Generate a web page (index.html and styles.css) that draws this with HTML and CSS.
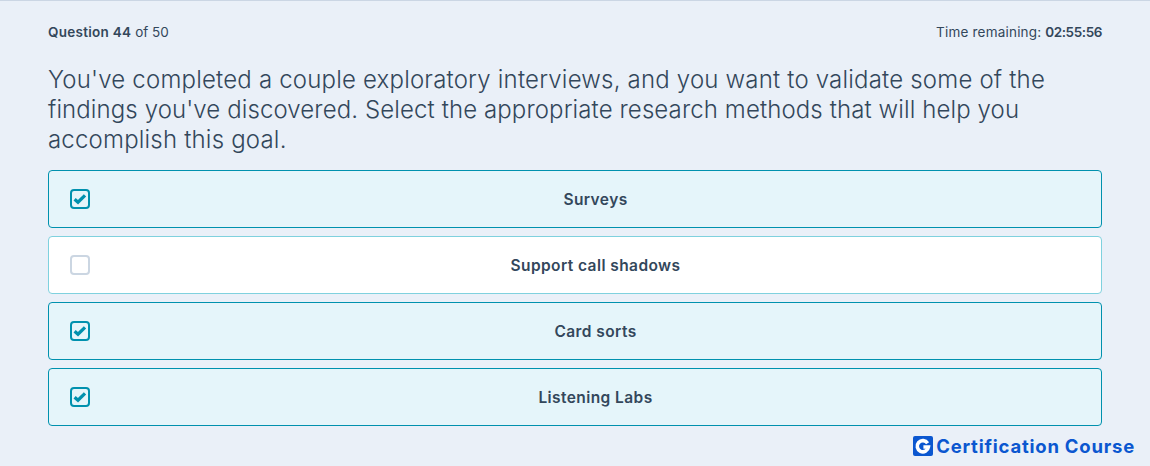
FILE: index.html
```html
<!DOCTYPE html>
<html lang="en">
<head>
<meta charset="utf-8">
<title>Question 44 of 50</title>
<link rel="stylesheet" href="styles.css">
</head>
<body>
<main class="quiz">
  <header class="meta">
    <div><strong class="count">Question 44</strong> of 50</div>
    <div><span class="timer-label">Time remaining:</span> <strong class="timer">02:55:56</strong></div>
  </header>
  <h1 class="question">You've completed a couple exploratory interviews, and you want to validate some of the <span class="tight">findings you've discovered. Select the appropriate research methods that will help you</span> accomplish this goal.</h1>
  <ul class="options">
    <li class="option selected">
      <span class="box"><svg viewBox="0 0 16 16" class="tick"><path d="M2.6 8.2 6 11.2 13 4.4"/></svg></span>
      <span class="label">Surveys</span>
    </li>
    <li class="option">
      <span class="box"></span>
      <span class="label">Support call shadows</span>
    </li>
    <li class="option selected">
      <span class="box"><svg viewBox="0 0 16 16" class="tick"><path d="M2.6 8.2 6 11.2 13 4.4"/></svg></span>
      <span class="label">Card sorts</span>
    </li>
    <li class="option selected">
      <span class="box"><svg viewBox="0 0 16 16" class="tick"><path d="M2.6 8.2 6 11.2 13 4.4"/></svg></span>
      <span class="label">Listening Labs</span>
    </li>
  </ul>
  <footer class="brand">
    <span class="logo"><svg viewBox="0 0 20 20"><path d="M14.6 7.2A5.6 5.6 0 1 0 15.4 11H10.4"/></svg></span>
    <span class="brand-name">Certification Course</span>
  </footer>
</main>
</body>
</html>
```
FILE: styles.css
```css
* { box-sizing: border-box; }
html, body { margin: 0; height: 100%; }
body {
  background: #eaf0f8;
  color: #33475b;
  font-family: "Inter", "Liberation Sans", sans-serif;
  overflow: hidden;
}
.quiz {
  border-top: 1px solid #cbd6e4;
  height: 466px;
  padding: 0 48px;
  position: relative;
}
.meta {
  display: flex;
  justify-content: space-between;
  font-size: 13.5px;
  line-height: 20px;
  padding-top: 21px;
}
.meta strong { font-weight: 600; }
.count { letter-spacing: 0.28px; }
.timer-label { letter-spacing: 0.2px; }
.timer { letter-spacing: -0.4px; }
.question {
  margin: 23px 0 15px;
  font-size: 24px;
  font-weight: 300;
  line-height: 30px;
  letter-spacing: 0.19px;
}
.tight { letter-spacing: 0.105px; }
.options {
  list-style: none;
  margin: 0;
  padding: 0;
  display: flex;
  flex-direction: column;
  gap: 8px;
}
.option {
  height: 58px;
  border: 1px solid #7fd1de;
  border-radius: 4px;
  background: #fff;
  display: flex;
  align-items: center;
  padding-left: 21px;
  font-size: 15.5px;
  font-weight: 600;
  letter-spacing: 0.42px;
}
.option.selected {
  background: #e5f5fa;
  border-color: #0091ae;
}
.box {
  width: 20px;
  height: 20px;
  border: 2px solid #cbd6e2;
  border-radius: 4px;
  flex: none;
  display: block;
}
.selected .box { border-color: #0091ae; }
.tick { display: block; width: 16px; height: 16px; fill: none; stroke: #0091ae; stroke-width: 3.3; }
.label { flex: 1; text-align: center; }
.brand {
  position: absolute;
  right: 15px;
  bottom: 9px;
  display: flex;
  align-items: center;
  gap: 3px;
  color: #0b57d0;
  font-size: 18.5px;
  font-weight: 700;
  letter-spacing: 0.78px;
}
.logo { width: 20px; height: 20px; background: #0b57d0; border-radius: 2px; display: block; }
.logo svg { display: block; fill: none; stroke: #fff; stroke-width: 3.6; }
```
